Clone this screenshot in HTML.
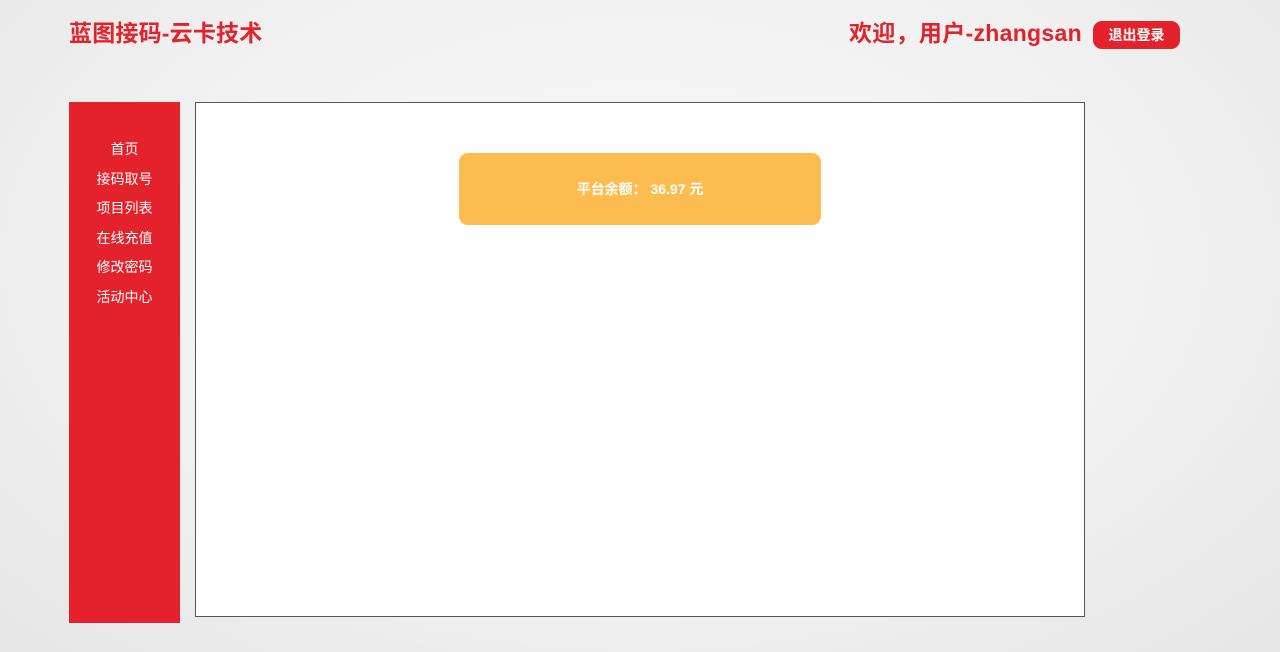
<!DOCTYPE html><html><head><meta charset="utf-8"><style>
body{margin:0;width:1280px;height:652px;overflow:hidden;background:radial-gradient(ellipse at 50% 40%,#fafafa 0%,#f0f0f0 60%,#e6e6e6 100%);font-family:"Liberation Sans","Noto Sans CJK SC",sans-serif;position:relative}
.t{position:absolute;color:#e3222b;font-weight:bold}
</style></head><body>
<div class="t" style="left:69px;top:14px;font-size:23px;letter-spacing:0.2px">蓝图接码-云卡技术</div>
<div class="t" style="left:849px;top:14px;font-size:23px;letter-spacing:0.3px">欢迎，用户-zhangsan</div>
<div style="position:absolute;left:1093px;top:21px;width:87px;height:28px;background:#e3222b;border-radius:9px;color:#fff;font-weight:bold;font-size:14px;line-height:28px;text-align:center">退出登录</div>
<div style="position:absolute;left:69px;top:102px;width:111px;height:521px;background:#e3222b;color:#fff;font-size:14px;text-align:center;padding-top:33px;box-sizing:border-box;line-height:29.6px">首页<br>接码取号<br>项目列表<br>在线充值<br>修改密码<br>活动中心</div>
<div style="position:absolute;left:195px;top:102px;width:890px;height:515px;box-sizing:border-box;background:#fff;border:1px solid #555"></div>
<div style="position:absolute;left:459px;top:153px;width:362px;height:72px;background:#fdbc50;border-radius:9px;color:#fff;font-weight:bold;font-size:14px;line-height:72px;text-align:center">平台余额：&nbsp;36.97 元</div>
</body></html>
